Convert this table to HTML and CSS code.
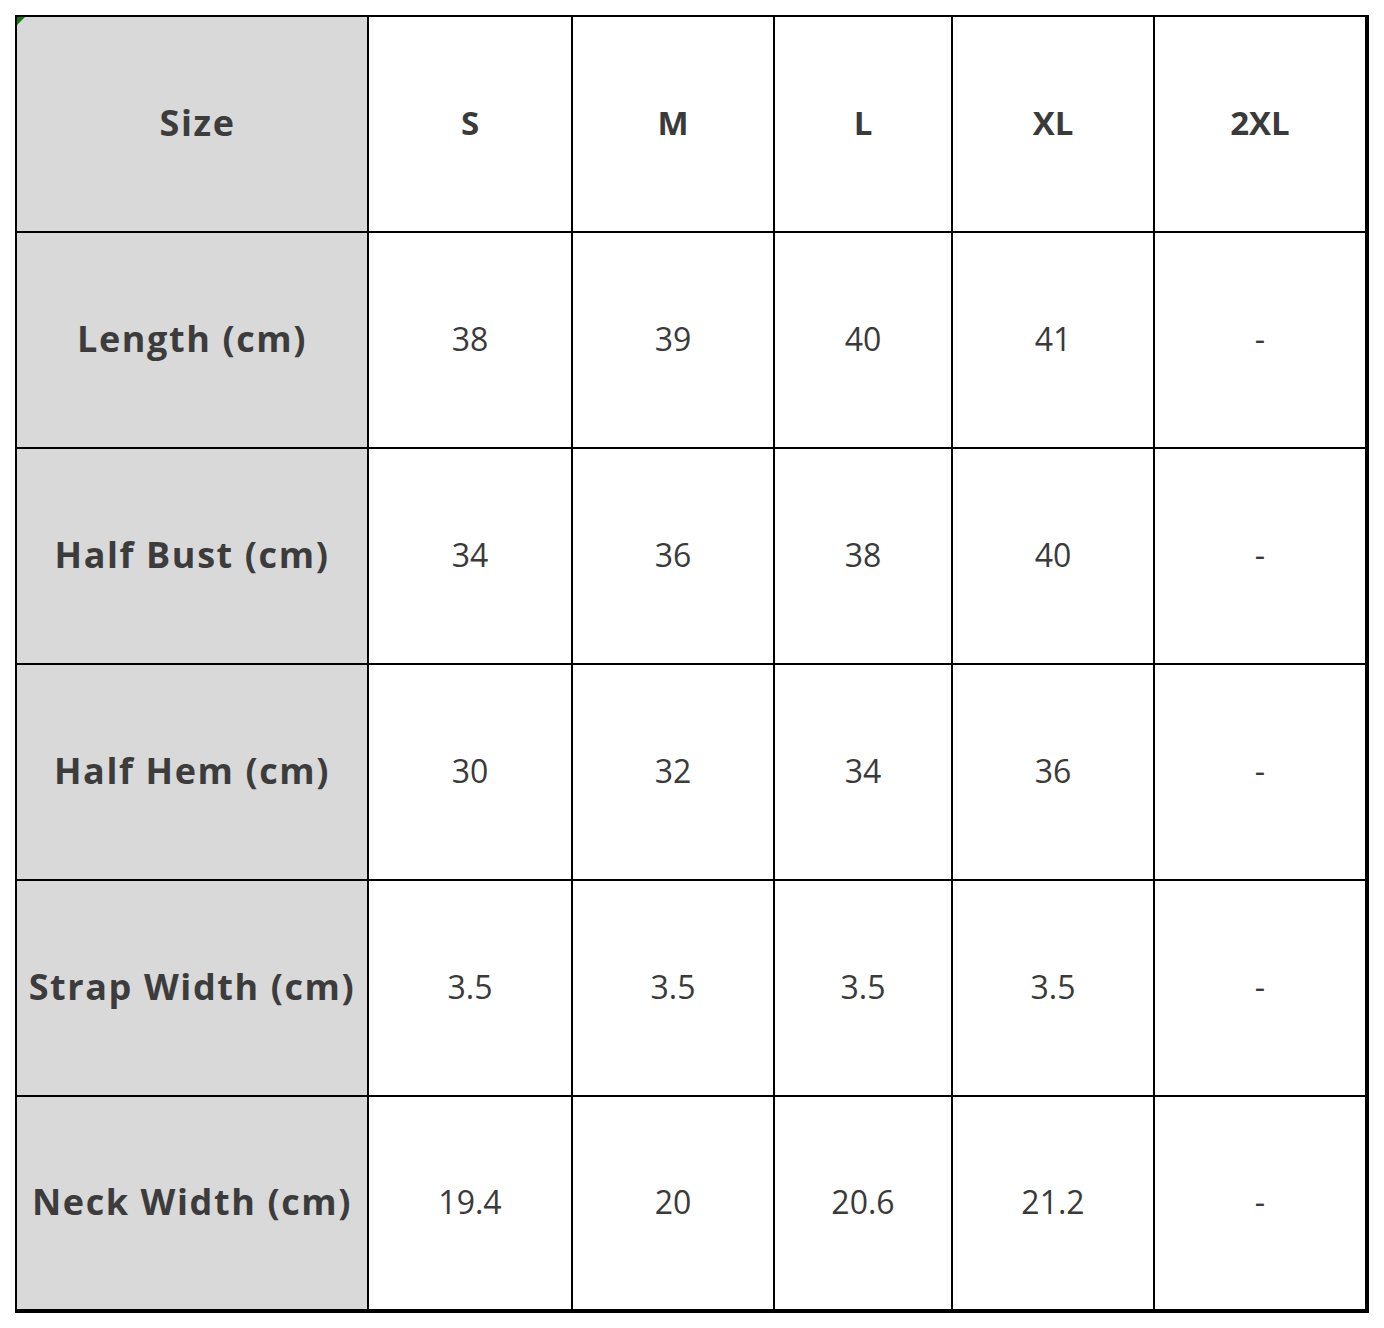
FILE: index.html
```html
<!DOCTYPE html>
<html>
<head>
<meta charset="utf-8">
<link rel="stylesheet" href="styles.css">
</head>
<body>
<div class="wrap">
  <div class="grid">
    <div class="cell head first"><span class="marker"></span>Size</div>
    <div class="cell bold">S</div>
    <div class="cell bold">M</div>
    <div class="cell bold">L</div>
    <div class="cell bold">XL</div>
    <div class="cell bold">2XL</div>

    <div class="cell head">Length (cm)</div>
    <div class="cell">38</div>
    <div class="cell">39</div>
    <div class="cell">40</div>
    <div class="cell">41</div>
    <div class="cell">-</div>

    <div class="cell head">Half Bust (cm)</div>
    <div class="cell">34</div>
    <div class="cell">36</div>
    <div class="cell">38</div>
    <div class="cell">40</div>
    <div class="cell">-</div>

    <div class="cell head">Half Hem (cm)</div>
    <div class="cell">30</div>
    <div class="cell">32</div>
    <div class="cell">34</div>
    <div class="cell">36</div>
    <div class="cell">-</div>

    <div class="cell head">Strap Width (cm)</div>
    <div class="cell">3.5</div>
    <div class="cell">3.5</div>
    <div class="cell">3.5</div>
    <div class="cell">3.5</div>
    <div class="cell">-</div>

    <div class="cell head">Neck Width (cm)</div>
    <div class="cell">19.4</div>
    <div class="cell">20</div>
    <div class="cell">20.6</div>
    <div class="cell">21.2</div>
    <div class="cell">-</div>
  </div>
</div>
</body>
</html>
```
FILE: styles.css
```css
html, body {
  margin: 0;
  padding: 0;
  background: #ffffff;
}
.wrap {
  padding: 15px;
}
.grid {
  display: grid;
  width: 1354px;
  box-sizing: border-box;
  background: #000000;
  padding: 2px 4px 4px 2px;
  gap: 2px;
  grid-template-columns: 350px 202px 200px 176px 200px 210px;
  grid-template-rows: 214px 214px 214px 214px 214px 212px;
  font-family: "Open Sans", "Noto Sans", sans-serif;
}
.cell {
  background: #ffffff;
  display: flex;
  align-items: center;
  justify-content: center;
  padding-bottom: 3px;
  box-sizing: border-box;
  font-size: 32px;
  color: #3a3a3a;
  position: relative;
}
.bold {
  font-weight: 700;
  font-size: 33px;
}
.head {
  background: #d9d9d9;
  font-weight: 700;
  font-size: 36px;
  letter-spacing: 1.6px;
  color: #3c3c3c;
}
.first {
  padding-left: 11px;
}
.marker {
  position: absolute;
  left: 0;
  top: 0;
  width: 0;
  height: 0;
  border-top: 8px solid #0a7d0a;
  border-right: 8px solid transparent;
}
```
